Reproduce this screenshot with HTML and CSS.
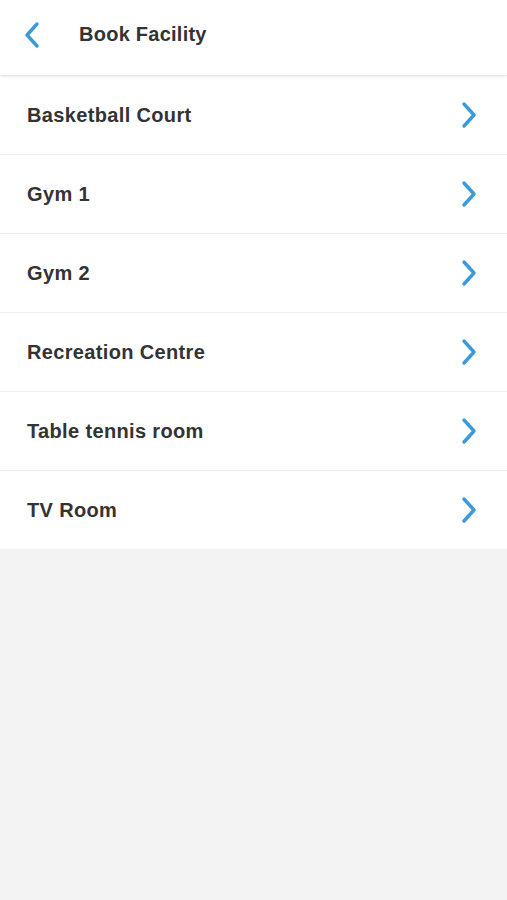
FILE: index.html
```html
<!DOCTYPE html>
<html>
<head>
<meta charset="utf-8">
<link rel="stylesheet" href="styles.css">
</head>
<body>
<header class="topbar">
  <svg class="back" width="18" height="28" viewBox="0 0 18 28"><path d="M14 3 L4 14 L14 25" fill="none" stroke="#3b9ad9" stroke-width="3.4" stroke-linecap="round" stroke-linejoin="round"/></svg>
  <h1 class="title">Book Facility</h1>
</header>
<ul class="list">
  <li class="row"><span>Basketball Court</span><svg class="chev" width="18" height="28" viewBox="0 0 18 28"><path d="M4 3 L14 14 L4 25" fill="none" stroke="#3b9ad9" stroke-width="3.4" stroke-linecap="round" stroke-linejoin="round"/></svg></li>
  <li class="row"><span>Gym 1</span><svg class="chev" width="18" height="28" viewBox="0 0 18 28"><path d="M4 3 L14 14 L4 25" fill="none" stroke="#3b9ad9" stroke-width="3.4" stroke-linecap="round" stroke-linejoin="round"/></svg></li>
  <li class="row"><span>Gym 2</span><svg class="chev" width="18" height="28" viewBox="0 0 18 28"><path d="M4 3 L14 14 L4 25" fill="none" stroke="#3b9ad9" stroke-width="3.4" stroke-linecap="round" stroke-linejoin="round"/></svg></li>
  <li class="row"><span>Recreation Centre</span><svg class="chev" width="18" height="28" viewBox="0 0 18 28"><path d="M4 3 L14 14 L4 25" fill="none" stroke="#3b9ad9" stroke-width="3.4" stroke-linecap="round" stroke-linejoin="round"/></svg></li>
  <li class="row"><span>Table tennis room</span><svg class="chev" width="18" height="28" viewBox="0 0 18 28"><path d="M4 3 L14 14 L4 25" fill="none" stroke="#3b9ad9" stroke-width="3.4" stroke-linecap="round" stroke-linejoin="round"/></svg></li>
  <li class="row"><span>TV Room</span><svg class="chev" width="18" height="28" viewBox="0 0 18 28"><path d="M4 3 L14 14 L4 25" fill="none" stroke="#3b9ad9" stroke-width="3.4" stroke-linecap="round" stroke-linejoin="round"/></svg></li>
</ul>
</body>
</html>
```
FILE: styles.css
```css
html, body {
  margin: 0;
  padding: 0;
  background: #f3f3f3;
  font-family: "Liberation Sans", Arial, sans-serif;
  color: #333;
}
.topbar {
  height: 75px;
  background: #fff;
  display: flex;
  align-items: center;
  padding-left: 23px;
  box-shadow: 0 1px 3px rgba(0,0,0,0.15);
  position: relative;
  z-index: 1;
}
.back {
  display: block;
  margin-top: -6px;
}
.title {
  margin: 0 0 0 38px;
  font-size: 20px;
  font-weight: bold;
  letter-spacing: 0.25px;
  color: #333;
  margin-top: -7px;
}
.list {
  list-style: none;
  margin: 0;
  padding: 0;
  background: #fff;
}
.row {
  height: 78px;
  border-top: 1px solid #f0f0f0;
  display: flex;
  align-items: center;
  justify-content: space-between;
  padding: 0 29px 0 27px;
  font-size: 20px;
  font-weight: bold;
  letter-spacing: 0.35px;
  color: #333;
}
.row:first-child {
  border-top: 1px solid #fff;
}
.chev {
  display: block;
}
```
